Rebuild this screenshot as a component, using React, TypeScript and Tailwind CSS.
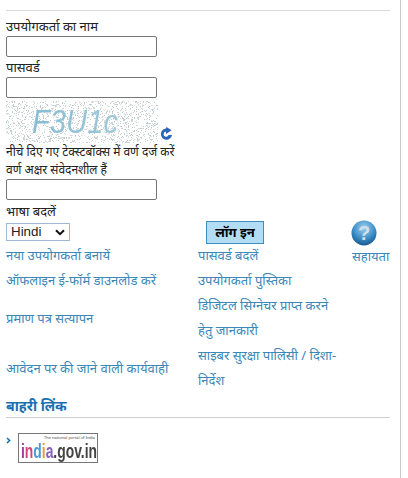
import type { ReactNode } from "react";

const font = { fontFamily: '"Noto Sans", "Liberation Sans", Arial, sans-serif' };

function noiseDots() {
  const dots: { x: number; y: number; c: string }[] = [];
  let s = 12345;
  const rnd = () => {
    s = (s * 1103515245 + 12345) & 0x7fffffff;
    return s / 0x7fffffff;
  };
  const cols = ["#c6cac8", "#d4d7d5", "#e0e2e1", "#bcd2da"];
  for (let i = 0; i < 1500; i++) {
    dots.push({ x: Math.floor(rnd() * 152), y: Math.floor(rnd() * 42), c: cols[Math.floor(rnd() * 4)] });
  }
  return dots;
}

function Captcha() {
  return (
    <div className="relative w-[152px] h-[42px] overflow-hidden bg-white">
      <svg width="152" height="42" className="absolute inset-0">
        {noiseDots().map((d, i) => (
          <rect key={i} x={d.x} y={d.y} width="1" height="1" fill={d.c} />
        ))}
      </svg>
      <span className="absolute left-[26px] top-[0px] origin-left scale-x-[0.86] text-[34px] leading-[40px] italic whitespace-nowrap bg-gradient-to-r from-[#86bcd6] to-[#9fc9d8] bg-clip-text text-transparent font-['Liberation_Sans']">F3U1c</span>
    </div>
  );
}

function Refresh() {
  return (
    <svg width="14" height="14" viewBox="0 0 14 14" className="mb-[2px] ml-[1px]">
      <path d="M7 1.5 A5.6 5.6 0 1 0 13 8 L9.6 8 A2.6 2.6 0 1 1 7 4.6 L7 7 L12.6 3.2 L7.5 0 Z" fill="#2a66b8" />
    </svg>
  );
}

function HelpIcon() {
  return (
    <svg width="26" height="26" viewBox="0 0 26 26">
      <defs>
        <radialGradient id="h" cx="50%" cy="30%" r="70%">
          <stop offset="0%" stopColor="#9fd0ee" />
          <stop offset="60%" stopColor="#3f8fc8" />
          <stop offset="100%" stopColor="#14598f" />
        </radialGradient>
      </defs>
      <circle cx="13" cy="13" r="12.5" fill="url(#h)" />
      <text x="13" y="20" textAnchor="middle" fontSize="20" fontWeight="700" fill="#cfe0ea" fontFamily="Liberation Sans">?</text>
    </svg>
  );
}

function Lnk({ children, className = "" }: { children: ReactNode; className?: string }) {
  return <a className={"text-[#3a87b8] text-[13px] leading-[25px] " + className}>{children}</a>;
}

export default function App() {
  return (
    <div className="w-[408px] h-[478px] bg-white overflow-hidden" style={font}>
      <div className="w-[401px] h-[478px] border-r border-[#cccccc] pt-[10px]">
        <div className="ml-[6px] w-[384px] border-t border-[#d9d9d9]" />
        <div className="pl-[6px] text-[#222] text-[13px]">
          <div className="mt-[5px] leading-[20px]">उपयोगकर्ता का नाम</div>
          <input className="block w-[151px] h-[21px] bg-white border border-[#767676] rounded-[2px]" />
          <div className="mt-[1px] leading-[19px]">पासवर्ड</div>
          <input className="block w-[151px] h-[21px] bg-white border border-[#767676] rounded-[2px]" />
          <div className="flex items-end mt-[3px]">
            <Captcha />
            <Refresh />
          </div>
          <div className="leading-[18px] whitespace-nowrap text-[12px]">नीचे दिए गए टेक्स्टबॉक्स में वर्ण दर्ज करें</div>
          <div className="leading-[18px] whitespace-nowrap text-[12px]">वर्ण अक्षर संवेदनशील हैं</div>
          <input className="block w-[151px] h-[21px] bg-white border border-[#767676] rounded-[2px]" />
          <div className="mt-[1px] leading-[20px]">भाषा बदलें</div>
        </div>
        <div className="flex h-[22px] pl-[6px]">
          <div className="w-[192px] pt-[2px]">
            <div className="w-[64px] h-[18px] border border-[#9fb8d8] flex items-center justify-between pl-[4px] pr-[4px] text-[13.33px] text-[#222]" style={{ fontFamily: "Liberation Sans" }}>
              <span>Hindi</span>
              <svg width="10" height="7" viewBox="0 0 10 7"><path d="M1 1.2 L5 5.2 L9 1.2" fill="none" stroke="#111" strokeWidth="2" /></svg>
            </div>
          </div>
          <div className="w-[145px] pl-[8px]">
            <button className="block w-[58px] h-[23px] bg-[#b3dcf5] border border-[#3c8fc4] text-[13px] font-bold text-black leading-[21px]">लॉग इन</button>
          </div>
          <div className="-mt-[1px] pl-[8px]"><HelpIcon /></div>
        </div>
        <div className="flex pl-[6px]">
          <div className="w-[192px] flex flex-col">
            <Lnk className="h-[25px]">नया उपयोगकर्ता बनायें</Lnk>
            <Lnk className="h-[25px]">ऑफलाइन ई-फॉर्म डाउनलोड करें</Lnk>
            <Lnk className="h-[50px] flex items-center">प्रमाण पत्र सत्यापन</Lnk>
            <Lnk className="h-[50px] flex items-center">आवेदन पर की जाने वाली कार्यवाही</Lnk>
          </div>
          <div className="w-[154px] pr-[8px] flex flex-col">
            <Lnk>पासवर्ड बदलें</Lnk>
            <Lnk>उपयोगकर्ता पुस्तिका</Lnk>
            <Lnk>डिजिटल सिग्नेचर प्राप्त करने हेतु जानकारी</Lnk>
            <Lnk>साइबर सुरक्षा पालिसी / दिशा-निर्देश</Lnk>
          </div>
          <div><Lnk>सहायता</Lnk></div>
        </div>
        <div className="ml-[6px] w-[384px] h-[25px] border-b border-[#cfcfcf] text-[14px] font-bold leading-[26px] text-[#1a6fb0]">बाहरी लिंक</div>
        <div className="flex mt-[15px] pl-[6px]">
          <svg width="5" height="7" viewBox="0 0 5 7" className="mt-[4px]"><path d="M1 1 L3.6 3.5 L1 6" fill="none" stroke="#1a6fb0" strokeWidth="1.6" /></svg>
          <div className="ml-[7px] w-[80px] h-[30px] border border-[#777] bg-white overflow-hidden pl-[2px]">
            <div className="text-[4px] leading-[7px] text-[#444] whitespace-nowrap pl-[23px]">The national portal of India</div>
            <div className="origin-left scale-x-[0.66] text-[21px] leading-[19px] font-bold text-[#444] whitespace-nowrap" style={{ fontFamily: "Liberation Sans" }}>
              <span className="text-[#a6399a]">i</span><span className="text-[#d1477a]">n</span><span className="text-[#4a9bd4]">d</span><span className="text-[#e0a030]">i</span><span className="text-[#8b5fbf]">a</span>.gov.in
            </div>
          </div>
        </div>
      </div>
    </div>
  );
}
